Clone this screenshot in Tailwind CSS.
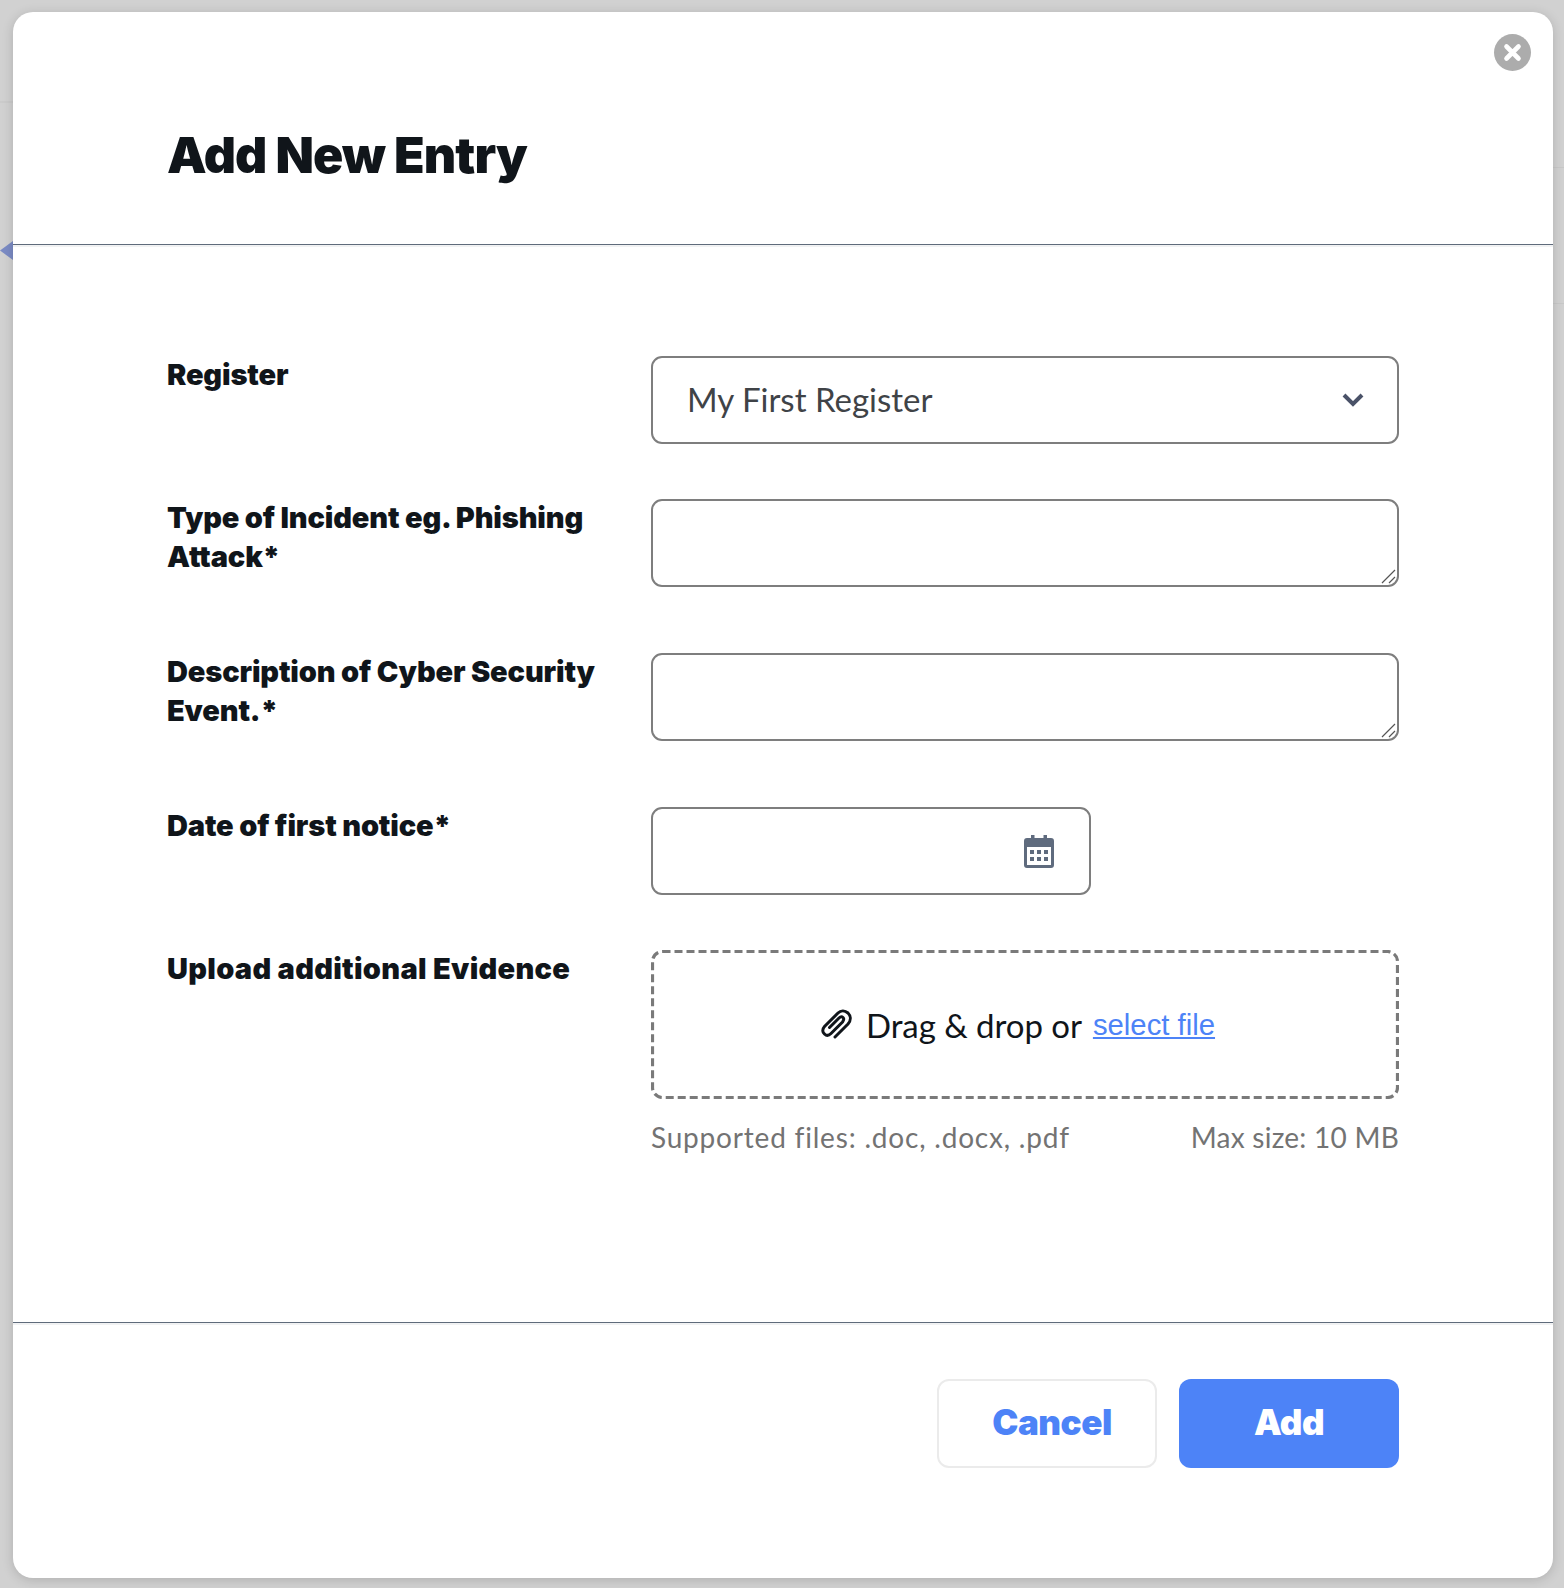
<!DOCTYPE html>
<html lang="en">
<head>
<meta charset="utf-8">
<title>Add New Entry</title>
<script src="https://cdn.jsdelivr.net/npm/@tailwindcss/browser@4"></script>
</head>
<body class="m-0 bg-[#d1d1d1]">
<div class="relative w-[1564px] h-[1588px] overflow-hidden pt-[12px] pl-[13px] bg-[#d1d1d1]">
  <div class="absolute left-0 top-[101px] w-[13px] h-[2px] bg-[#cbcbcb]"></div>
  <div class="absolute right-0 top-[167px] w-[11px] h-[1px] bg-[#c8c8c8]"></div>
  <div class="absolute right-0 top-[303px] w-[11px] h-[1px] bg-[#c8c8c8]"></div>
  <svg class="absolute left-0 top-[241px]" width="13" height="19" viewBox="0 0 13 19"><path d="M0 9.500 13 0v19z" fill="#7b8bc4"/></svg>

  <div class="relative w-[1540px] h-[1566px] bg-white rounded-[20px] shadow-[0_2px_12px_rgba(0,0,0,0.16)] flex flex-col font-['Lato',sans-serif]">
    <button class="absolute left-[1481px] top-[22px] w-[37px] h-[37px] rounded-full bg-[#acacac] flex items-center justify-center" aria-label="Close">
      <svg width="19" height="19" viewBox="0 0 19 19"><path d="M3.500 3.500l12 12M15.500 3.500l-12 12" stroke="#fff" stroke-width="4.600" stroke-linecap="round" fill="none"/></svg>
    </button>

    <header class="h-[233px] shrink-0 pl-[154px] pt-[113px] border-b border-[#5f6b7b] shadow-[0_2px_0_#f1f2f3]">
      <h1 class="text-[50px] leading-[60px] font-black text-[#10151a] tracking-[-0.9px] font-['Inter',sans-serif]">Add New Entry</h1>
    </header>

    <form class="h-[1077px] shrink-0 pl-[154px] pr-[154px] pt-[111px] grid grid-cols-[484px_748px] content-start text-[#10151a]">
      <label class="text-[29px] leading-[38.5px] font-black tracking-[-0.15px] font-['Inter',sans-serif]">Register</label>
      <div class="relative h-[88px] mb-[55px] rounded-[11px] border-2 border-[#7e7e7e] flex items-center justify-between pl-[34px] pr-[33px] text-[33px] text-[#3f4347]">
        <span>My First Register</span>
        <svg width="22" height="14" viewBox="0 0 22 14"><path d="M2 2l9 9 9-9" stroke="#4a5268" stroke-width="4" fill="none"/></svg>
      </div>

      <label class="text-[29px] leading-[38.5px] font-black tracking-[-0.15px] font-['Inter',sans-serif]">Type of Incident eg. Phishing Attack*</label>
      <div class="relative h-[88px] mb-[66px]">
        <textarea class="block w-full h-full resize-none rounded-[11px] border-2 border-[#7e7e7e]"></textarea>
        <svg class="absolute right-[3px] bottom-[3px]" width="15" height="15" viewBox="0 0 15 15"><path d="M1 14 14 1M8 14l6-6" stroke="#555" stroke-width="1.200" fill="none"/></svg>
      </div>

      <label class="text-[29px] leading-[38.5px] font-black tracking-[-0.15px] font-['Inter',sans-serif]">Description of Cyber Security Event.*</label>
      <div class="relative h-[88px] mb-[66px]">
        <textarea class="block w-full h-full resize-none rounded-[11px] border-2 border-[#7e7e7e]"></textarea>
        <svg class="absolute right-[3px] bottom-[3px]" width="15" height="15" viewBox="0 0 15 15"><path d="M1 14 14 1M8 14l6-6" stroke="#555" stroke-width="1.200" fill="none"/></svg>
      </div>

      <label class="text-[29px] leading-[38.5px] font-black tracking-[-0.15px] font-['Inter',sans-serif]">Date of first notice*</label>
      <div class="h-[88px] w-[440px] mb-[55px] rounded-[11px] border-2 border-[#7e7e7e] flex items-center justify-end pr-[35px]">
        <svg width="30" height="33" viewBox="0 0 30 33">
          <path d="M7 0h3.500v5H7zM19.500 0H23v5h-3.500z" fill="#5f6b7e"/>
          <path fill-rule="evenodd" d="M3 3h24a3 3 0 0 1 3 3v24a3 3 0 0 1-3 3H3a3 3 0 0 1-3-3V6a3 3 0 0 1 3-3zm0 9v18h24V12z" fill="#5f6b7e"/>
          <path d="M6 15h4v4H6zM13 15h4v4h-4zM20 15h4v4h-4zM6 22h4v4H6zM13 22h4v4h-4zM20 22h4v4h-4z" fill="#5f6b7e"/>
        </svg>
      </div>

      <label class="text-[29px] leading-[38.5px] font-black font-['Inter',sans-serif] tracking-[0.3px]">Upload additional Evidence</label>
      <div>
        <div class="relative h-[149px] flex items-center justify-center pr-[14px]">
          <svg class="absolute inset-0" width="748" height="149" viewBox="0 0 748 149"><rect x="1.500" y="1.500" width="745" height="146" rx="10" fill="none" stroke="#7a7a7a" stroke-width="3.200" stroke-dasharray="8 4"/></svg>
          <svg class="mr-[12px]" width="31" height="31" viewBox="0 0 31 31"><path d="M14 28 27 15C30.500 11 29.500 6.500 27 4 24 1.500 20 1 17 4L3.500 17.500C1 20.500 1.500 23.500 3.500 25 5.500 27 8 26.500 10 24.500L21.500 13C23 11 23 9.500 22 8.500 21 7.500 19.500 7.500 18 9L8.500 18.500" stroke="#10151a" stroke-width="3" fill="none" stroke-linecap="round"/></svg>
          <span class="text-[33px] leading-[40px] text-[#10151a] ml-[2px] tracking-[-0.05px]">Drag &amp; drop or</span>
          <a class="ml-[11px] text-[29.300px] leading-[40px] text-[#4d83f7] underline font-['Liberation_Sans',sans-serif]" href="#">select file</a>
        </div>
        <div class="flex justify-between mt-[20px] text-[28px] leading-[36px] text-[#737373]">
          <span class="tracking-[0.8px]">Supported files: .doc, .docx, .pdf</span>
          <span class="tracking-[0.25px]">Max size: 10 MB</span>
        </div>
      </div>
    </form>

    <footer class="border-t border-[#5f6b7b] shadow-[inset_0_2px_0_#f1f2f3] flex-1 flex justify-end gap-[22px] pr-[154px] pt-[56px] font-['Inter',sans-serif]">
      <button type="button" class="w-[220px] h-[89px] pb-[2px] pl-[10px] rounded-[12px] bg-white border-2 border-[#ebebeb] text-[#4d83f7] text-[35px] font-black tracking-[-0.5px]">Cancel</button>
      <button type="button" class="w-[220px] h-[89px] pb-[2px] rounded-[12px] bg-[#4d83f7] text-white text-[35px] font-black tracking-[-0.5px]">Add</button>
    </footer>
  </div>
</div>
</body>
</html>
